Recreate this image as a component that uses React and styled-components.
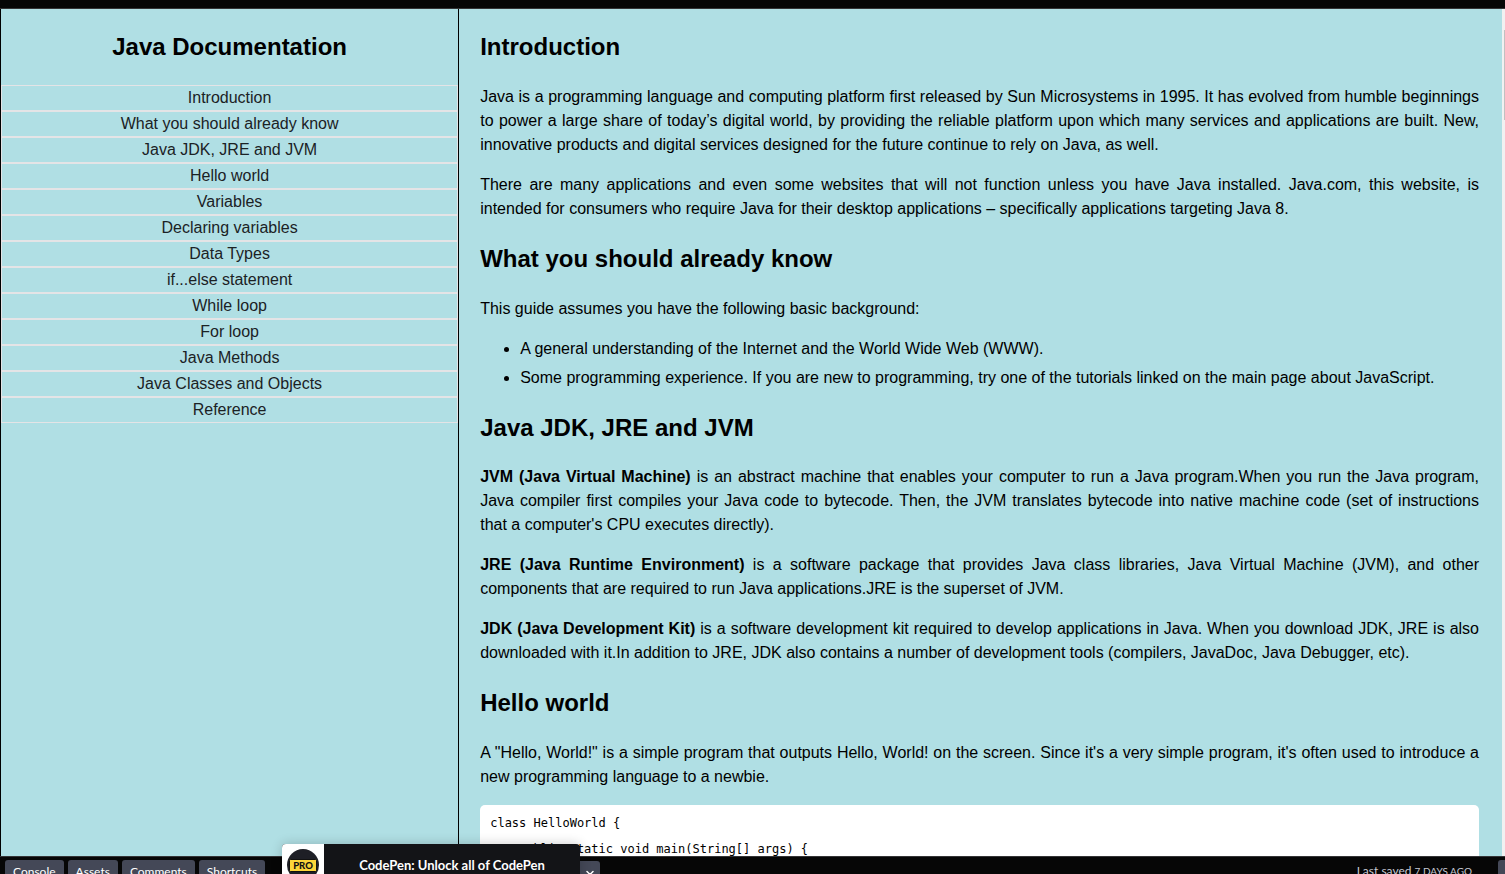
import React from "react";
import styled, { createGlobalStyle } from "styled-components";
import { ChevronDown } from "lucide-react";

const GlobalStyle = createGlobalStyle`
  *, *::before, *::after { box-sizing: border-box; }
  body { margin: 0; background: #060606; color: #000; font-family: Arial, "Liberation Sans", sans-serif; font-size: 16px; line-height: 24px; }
`;

const Shell = styled.div`
  display: flex;
  flex-direction: column;
  height: 100vh;
  overflow: hidden;
`;

const TopBar = styled.header`
  flex: 0 0 9px;
  background: #060606;
  border-bottom: 1px solid #343436;
`;

const Preview = styled.div`
  flex: 1;
  min-height: 0;
  display: flex;
  overflow: hidden;
  background: #b0dfe4;
  border-left: 1px solid #000;
`;

const Sidebar = styled.nav`
  flex: 0 0 calc(30% + 7px);
  border-right: 1px solid #000;
  text-align: center;
`;

const Heading = styled.h2`
  font-size: 24px;
  line-height: 36px;
  font-weight: bold;
`;

const NavList = styled.ul`
  list-style: none;
  margin: 0;
  padding: 0;
`;

const NavLink = styled.a`
  display: block;
  border: 1px solid #e4e4e6;
  color: #1b2224;
  text-decoration: none;
`;

const Content = styled.main`
  flex: 1;
  min-width: 0;
  overflow: hidden;
  padding: 0 23px 0 21px;
  text-align: justify;
`;

const Text = styled.p`
  margin: 16px 0;
`;

const Bullets = styled.ul`
  margin: 16px 0;
  padding-left: 40px;
`;

const Bullet = styled.li`
  & + & { margin-top: 5px; }
`;

const Code = styled.pre`
  margin: 16px 0;
  padding: 5px 10px;
  background: #fff;
  border-radius: 5px;
  font-family: "DejaVu Sans Mono", monospace;
  font-size: 12px;
  line-height: 26px;
`;

const ScrollTrack = styled.div`
  flex: 0 0 3px;
  padding: 21px 0 0 2px;
  background: #f1f1f1;
`;

const ScrollThumb = styled.div`
  height: 90px;
  background: #c1c1c1;
`;

const Footer = styled.footer`
  position: relative;
  flex: 0 0 18px;
  min-height: 0;
  display: flex;
  align-items: flex-start;
  justify-content: space-between;
  padding: 3px 0 0 5px;
  background: #060606;
  border-top: 1px solid #343436;
  font-family: Lato, sans-serif;
`;

const FooterGroup = styled.div`
  display: flex;
  gap: 4px;
`;

const FooterButton = styled.button`
  height: 24px;
  padding: 2px 8px;
  border: 0;
  border-radius: 3px;
  background: #444857;
  color: #fff;
  font: 400 12px/18px Lato, sans-serif;
`;

const Saved = styled.div`
  display: flex;
  gap: 26px;
  color: #c7c9d3;
  font-size: 12px;
  line-height: 22px;
`;

const SavedTime = styled.span`
  font-size: 10px;
`;

const CornerButton = styled(FooterButton)`
  width: 7px;
  padding: 0;
  border-radius: 3px 0 0 0;
`;

const Promo = styled.a`
  position: absolute;
  left: 282px;
  top: -13px;
  width: 298px;
  height: 56px;
  display: flex;
  overflow: hidden;
  border-radius: 4px;
  background: #131417;
  box-shadow: 0 0 12px rgba(0, 0, 0, 0.2);
  color: #fff;
  text-decoration: none;
`;

const PromoLogo = styled.span`
  flex: 0 0 42px;
  padding: 5px;
  background: #fff;
`;

const PromoText = styled.span`
  flex: 1;
  padding-top: 9px;
  text-align: center;
  font-size: 13px;
  font-weight: 700;
`;

const ShareToggle = styled(FooterButton)`
  position: absolute;
  left: 576px;
  top: 4px;
  width: 24px;
  padding: 3px 0 0 4px;
`;

const links = [
  "Introduction", "What you should already know", "Java JDK, JRE and JVM", "Hello world",
  "Variables", "Declaring variables", "Data Types", "if...else statement", "While loop",
  "For loop", "Java Methods", "Java Classes and Objects", "Reference",
];
const slug = (s) => s.replace(/[^A-Za-z]+/g, "_");

function Section({ title, children }) {
  return (
    <section id={slug(title)}>
      <Heading>{title}</Heading>
      {children}
    </section>
  );
}

export default function App() {
  return (
    <Shell>
      <GlobalStyle />
      <TopBar />
      <Preview>
        <Sidebar>
          <Heading>Java Documentation</Heading>
          <NavList>
            {links.map((l) => (
              <li key={l}><NavLink href={"#" + slug(l)}>{l}</NavLink></li>
            ))}
          </NavList>
        </Sidebar>
        <Content>
          <Section title="Introduction">
            <Text>Java is a programming language and computing platform first released by Sun Microsystems in 1995. It has evolved from humble beginnings to power a large share of today’s digital world, by providing the reliable platform upon which many services and applications are built. New, innovative products and digital services designed for the future continue to rely on Java, as well.</Text>
            <Text>There are many applications and even some websites that will not function unless you have Java installed. Java.com, this website, is intended for consumers who require Java for their desktop applications – specifically applications targeting Java 8.</Text>
          </Section>
          <Section title="What you should already know">
            <Text>This guide assumes you have the following basic background:</Text>
            <Bullets>
              <Bullet>A general understanding of the Internet and the World Wide Web (WWW).</Bullet>
              <Bullet>Some programming experience. If you are new to programming, try one of the tutorials linked on the main page about JavaScript.</Bullet>
            </Bullets>
          </Section>
          <Section title="Java JDK, JRE and JVM">
            <Text><b>JVM (Java Virtual Machine)</b> is an abstract machine that enables your computer to run a Java program.When you run the Java program, Java compiler first compiles your Java code to bytecode. Then, the JVM translates bytecode into native machine code (set of instructions that a computer's CPU executes directly).</Text>
            <Text><b>JRE (Java Runtime Environment)</b> is a software package that provides Java class libraries, Java Virtual Machine (JVM), and other components that are required to run Java applications.JRE is the superset of JVM.</Text>
            <Text><b>JDK (Java Development Kit)</b> is a software development kit required to develop applications in Java. When you download JDK, JRE is also downloaded with it.In addition to JRE, JDK also contains a number of development tools (compilers, JavaDoc, Java Debugger, etc).</Text>
          </Section>
          <Section title="Hello world">
            <Text>A "Hello, World!" is a simple program that outputs Hello, World! on the screen. Since it's a very simple program, it's often used to introduce a new programming language to a newbie.</Text>
            <Code>{"class HelloWorld {\n    public static void main(String[] args) {"}</Code>
          </Section>
        </Content>
        <ScrollTrack><ScrollThumb /></ScrollTrack>
      </Preview>
      <Footer>
        <FooterGroup>
          <FooterButton>Console</FooterButton>
          <FooterButton>Assets</FooterButton>
          <FooterButton>Comments</FooterButton>
          <FooterButton>Shortcuts</FooterButton>
        </FooterGroup>
        <Saved>
          <span>Last saved <SavedTime>7 DAYS AGO</SavedTime></span>
          <CornerButton aria-label="More" />
        </Saved>
        <ShareToggle aria-label="Expand"><ChevronDown size={12} strokeWidth={3} /></ShareToggle>
        <Promo href="#pro">
          <PromoLogo>
            <svg width="32" height="32" viewBox="0 0 32 32" role="img" aria-label="PRO">
              <circle cx="16" cy="16" r="16" fill="#1e1f26" />
              <rect x="2.5" y="10.5" width="27" height="12" rx="1" fill="#fcd53a" stroke="#111" />
              <text x="16" y="20" textAnchor="middle" fontFamily="Lato, sans-serif" fontWeight="900" fontSize="9.5" fill="#111">PRO</text>
            </svg>
          </PromoLogo>
          <PromoText>CodePen: Unlock all of CodePen</PromoText>
        </Promo>
      </Footer>
    </Shell>
  );
}
